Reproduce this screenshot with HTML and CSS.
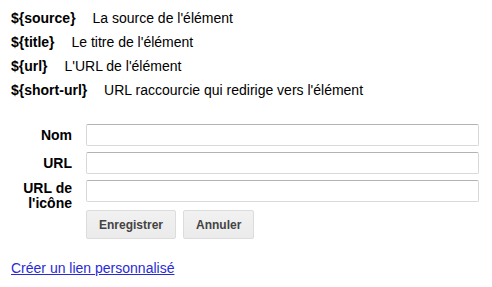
FILE: index.html
```html
<!DOCTYPE html>
<html lang="fr">
<head>
    <meta charset="UTF-8">
    <title>Liens personnalisés</title>
    <link rel="stylesheet" href="styles.css">
</head>
<body>
    <div class="vars">
        <p><strong>${source}</strong> La source de l'élément</p>
        <p><strong>${title}</strong> Le titre de l'élément</p>
        <p><strong>${url}</strong> L'URL de l'élément</p>
        <p><strong>${short-url}</strong> URL raccourcie qui redirige vers l'élément</p>
    </div>

    <form class="link-form">
        <label for="name">Nom</label>
        <input type="text" id="name">

        <label for="url">URL</label>
        <input type="text" id="url">

        <label for="icon" class="two-lines">URL de l'icône</label>
        <input type="text" id="icon">

        <div class="buttons">
            <button type="button">Enregistrer</button>
            <button type="button">Annuler</button>
        </div>
    </form>

    <a href="#" class="add-link">Créer un lien personnalisé</a>
</body>
</html>
```

FILE: styles.css
```css
* {
    box-sizing: border-box;
}
body {
    margin: 0;
    padding: 10px 11px 0;
    font-family: "Liberation Sans", Arial, sans-serif;
    font-size: 14px;
    color: #000;
}
.vars p {
    margin: 0 0 8px;
    line-height: 16px;
}
.vars strong {
    margin-right: 13px;
}
.link-form {
    display: grid;
    grid-template-columns: 61px 393px;
    column-gap: 14px;
    row-gap: 6px;
    margin-top: 26px;
    align-items: center;
}
.link-form label {
    font-weight: bold;
    text-align: right;
    line-height: 15px;
}
.link-form label.two-lines {
    align-self: start;
    margin-top: 1px;
}
.link-form input {
    height: 22px;
    border: 1px solid #d9d9d9;
    border-top-color: #b3b3b3;
    border-radius: 2px;
    padding: 0 4px;
    font: inherit;
    align-self: start;
}
.buttons {
    grid-column: 2;
    display: flex;
    gap: 7px;
    margin-top: -7px;
}
.buttons button {
    height: 29px;
    padding: 0 12px;
    font-family: inherit;
    font-size: 12px;
    font-weight: bold;
    color: #444;
    background: linear-gradient(#f1f1f1, #ebebeb);
    border: 1px solid #dcdcdc;
    border-radius: 2px;
}
.add-link {
    display: inline-block;
    margin-top: 21px;
    color: #2a2ad4;
}
```
